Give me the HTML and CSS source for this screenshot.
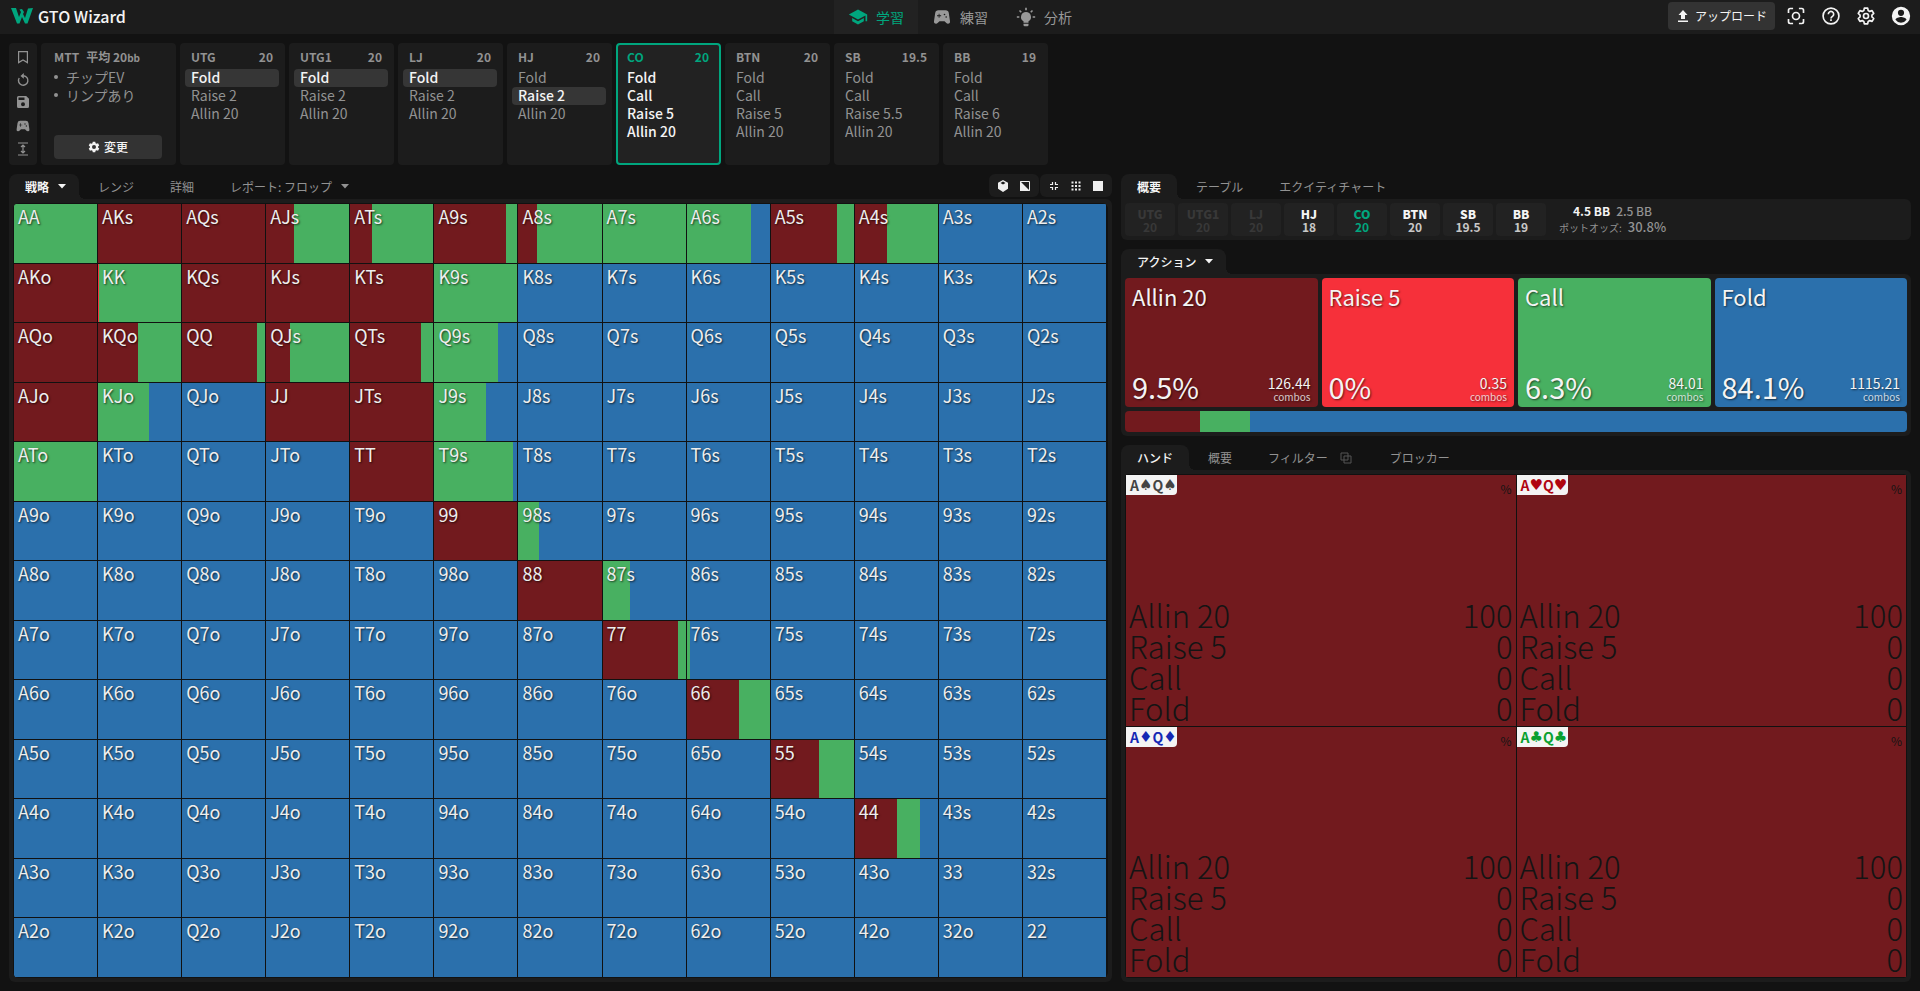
FILE: index.html
```html
<!DOCTYPE html>
<html lang="ja">
<head>
<meta charset="utf-8">
<title>GTO Wizard</title>
<link rel="stylesheet" href="styles.css">
</head>
<body>
<svg class="defs" aria-hidden="true">
  <symbol id="i-pad" viewBox="0 -1 24 24"><path fill="currentColor" fill-rule="evenodd" d="M21.6 16.1 20.2 6.4A4 4 0 0 0 16.200 3H7.800A4 4 0 0 0 3.800 6.400L2.400 16.100A2.550 2.550 0 0 0 4.900 19c.7 0 1.300-.3 1.800-.75L9 16h6l2.250 2.250c.5.450 1.150.750 1.800.750a2.550 2.550 0 0 0 2.550-2.900zM11 10H9v2H8v-2H6V9h2V7h1v2h2v1zm4-1a1 1 0 1 1 0-2 1 1 0 0 1 0 2zm2 3a1 1 0 1 1 0-2 1 1 0 0 1 0 2z"/></symbol>
  <symbol id="i-down" viewBox="0 0 8 5"><path fill="currentColor" d="M0 0h8L4 4.500z"/></symbol>
</svg>
<div class="app">
  <header class="topbar">
    <a class="brand" href="#">
      <svg width="22" height="16" viewBox="0 0 22 16" aria-hidden="true"><path fill="#00a67e" d="M0 0h5l3 9 2-5-1.500-2.500L11 1l2 3-1 2 2 4 3-9.500L22 0l-5.500 15.500H14L11 9l-2.500 6.500H6z"/></svg>
      <span>GTO Wizard</span>
    </a>
    <nav class="mainnav">
      <a class="navitem is-active" href="#"><svg width="20" height="20" viewBox="0 0 24 24"><path fill="currentColor" d="M5 13.200v4L12 21l7-3.800v-4L12 17zM12 3 1 9l11 6 9-4.900V17h2V9z"/></svg>学習</a>
      <a class="navitem" href="#"><svg width="20" height="20"><use href="#i-pad"/></svg>練習</a>
      <a class="navitem" href="#"><svg width="20" height="20" viewBox="0 0 24 24"><path fill="currentColor" d="M12 6a6 6 0 0 0-3 11.200V19h6v-1.800A6 6 0 0 0 12 6zM9 20h6v1.500a1.500 1.500 0 0 1-1.500 1.500h-3A1.500 1.500 0 0 1 9 21.500zM11 1h2v3h-2zM1 11h3v2H1zm19 0h3v2h-3zM3.500 4.900l1.400-1.400L7 5.600 5.600 7zm15.600-1.400 1.400 1.400L18.400 7 17 5.600z"/></svg>分析</a>
    </nav>
    <div class="tools">
      <button class="upload"><svg width="12" height="12" viewBox="0 0 12 12"><path fill="currentColor" d="M6 0 1.500 5H4v4h4V5h2.500zM1 10.500h10V12H1z"/></svg>アップロード</button>
      <button class="tool" aria-label="キャプチャ"><svg width="20" height="20" viewBox="0 0 24 24" fill="none" stroke="currentColor" stroke-width="2"><path d="M3 8.500V5a2 2 0 0 1 2-2h3.500M15.500 3H19a2 2 0 0 1 2 2v3.500M21 15.500V19a2 2 0 0 1-2 2h-3.500M8.500 21H5a2 2 0 0 1-2-2v-3.500"/><circle cx="12" cy="12" r="4.200"/></svg></button>
      <button class="tool" aria-label="ヘルプ"><svg width="20" height="20" viewBox="0 0 24 24" fill="none" stroke="currentColor" stroke-width="2"><circle cx="12" cy="12" r="9.500"/><path d="M8.800 9.800a3.200 3.200 0 1 1 5 2.600c-1 .7-1.800 1.300-1.800 2.600M12 16v2"/></svg></button>
      <button class="tool" aria-label="設定"><svg width="20" height="20" viewBox="0 0 24 24" fill="none" stroke="currentColor" stroke-width="2" stroke-linejoin="round"><path d="M10 2.500h4l.6 2.900 1.900 1.100 2.800-.9 2 3.400-2.200 2v2l2.200 2-2 3.400-2.800-.9-1.900 1.100-.6 2.900h-4l-.6-2.900-1.900-1.100-2.800.9-2-3.400 2.200-2v-2l-2.200-2 2-3.400 2.800.9 1.900-1.100z"/><circle cx="12" cy="12" r="3"/></svg></button>
      <button class="tool" aria-label="アカウント"><svg width="20" height="20" viewBox="0 0 24 24"><path fill="currentColor" fill-rule="evenodd" d="M12 1a11 11 0 1 0 0 22 11 11 0 0 0 0-22zm0 3.500a3.700 3.700 0 1 1 0 7.400 3.700 3.700 0 0 1 0-7.400zM12 20a8 8 0 0 1-6.600-3.500c0-2.200 4.400-3.400 6.600-3.400s6.600 1.200 6.600 3.400A8 8 0 0 1 12 20z"/></svg></button>
    </div>
  </header>

  <section class="spots">
    <div class="rail">
      <button aria-label="ブックマーク"><svg width="14" height="14" viewBox="0 0 14 14" fill="none" stroke="currentColor" stroke-width="1.200"><path d="M2.600 1.600h8.800v11L7 10l-4.400 2.600z"/></svg></button>
      <button aria-label="リセット"><svg width="14" height="14" viewBox="0 0 14 14" fill="none" stroke="currentColor" stroke-width="1.400"><path d="M3.200 5a4.700 4.700 0 1 0 4.300-2.200"/><path fill="currentColor" stroke="none" d="M7.800 0v5.800L4.500 2.900z"/></svg></button>
      <button aria-label="保存"><svg width="14" height="14" viewBox="0 0 14 14"><path fill="currentColor" fill-rule="evenodd" d="M2.500 1h7.700L13 3.800v7.700a1.500 1.500 0 0 1-1.500 1.500h-9A1.500 1.500 0 0 1 1 11.500v-9A1.500 1.500 0 0 1 2.500 1zM2.500 2.500V5h6V2.500zM7 7.200a2 2 0 1 0 0 4 2 2 0 0 0 0-4z"/></svg></button>
      <button aria-label="練習する"><svg width="16" height="16"><use href="#i-pad"/></svg></button>
      <button aria-label="高さ"><svg width="14" height="14" viewBox="0 0 14 14" fill="none" stroke="currentColor" stroke-width="1.200"><path d="M2 1h10M2 13h10M7 3v8M5 5l2-2 2 2M5 9l2 2 2-2"/></svg></button>
    </div>
    <div class="spot setup">
      <div class="spot-head"><span>MTT</span><span>平均 20<small>bb</small></span></div>
      <ul><li>チップEV</li><li>リンプあり</li></ul>
      <button class="change"><svg width="12" height="12" viewBox="0 0 24 24"><path fill="currentColor" fill-rule="evenodd" d="M9.500 1.500h5l.6 3 2 1.200 3-1 2.400 4.200-2.400 2v2.200l2.400 2-2.400 4.200-3-1-2 1.200-.6 3h-5l-.6-3-2-1.200-3 1-2.400-4.200 2.400-2v-2.200l-2.400-2 2.400-4.200 3 1 2-1.200zM12 8a4 4 0 1 0 0 8 4 4 0 0 0 0-8z"/></svg>変更</button>
    </div>
    <div class="spot"><div class="spot-head"><span>UTG</span><span>20</span></div><button class="act is-on">Fold</button><button class="act">Raise 2</button><button class="act">Allin 20</button></div>
    <div class="spot"><div class="spot-head"><span>UTG1</span><span>20</span></div><button class="act is-on">Fold</button><button class="act">Raise 2</button><button class="act">Allin 20</button></div>
    <div class="spot"><div class="spot-head"><span>LJ</span><span>20</span></div><button class="act is-on">Fold</button><button class="act">Raise 2</button><button class="act">Allin 20</button></div>
    <div class="spot"><div class="spot-head"><span>HJ</span><span>20</span></div><button class="act">Fold</button><button class="act is-on">Raise 2</button><button class="act">Allin 20</button></div>
    <div class="spot is-current"><div class="spot-head"><span>CO</span><span>20</span></div><button class="act">Fold</button><button class="act">Call</button><button class="act">Raise 5</button><button class="act">Allin 20</button></div>
    <div class="spot"><div class="spot-head"><span>BTN</span><span>20</span></div><button class="act">Fold</button><button class="act">Call</button><button class="act">Raise 5</button><button class="act">Allin 20</button></div>
    <div class="spot"><div class="spot-head"><span>SB</span><span>19.5</span></div><button class="act">Fold</button><button class="act">Call</button><button class="act">Raise 5.5</button><button class="act">Allin 20</button></div>
    <div class="spot"><div class="spot-head"><span>BB</span><span>19</span></div><button class="act">Fold</button><button class="act">Call</button><button class="act">Raise 6</button><button class="act">Allin 20</button></div>
  </section>

  <main class="work">
    <section class="col">
      <div class="tabs">
        <button class="tab is-active strong">戦略<svg class="caret" width="8" height="5"><use href="#i-down"/></svg></button>
        <button class="tab">レンジ</button>
        <button class="tab">詳細</button>
        <button class="tab">レポート: フロップ<svg class="caret" width="8" height="5"><use href="#i-down"/></svg></button>
        <div class="views">
          <div class="viewgroup">
            <button aria-label="3D"><svg width="12" height="12" viewBox="0 0 12 12"><path fill="currentColor" fill-rule="evenodd" d="M6 0l5 2.800v6L6 12 1 8.800v-6zM6 1.600 3.500 3 6 4.400 8.500 3z"/></svg></button>
            <button aria-label="分割"><svg width="12" height="12" viewBox="0 0 12 12"><path fill="none" stroke="currentColor" d="M1.500 1.500h9v9h-9z"/><path fill="currentColor" d="M1 1v10h10z"/></svg></button>
          </div>
          <div class="viewgroup">
            <button aria-label="縮小"><svg width="12" height="12" viewBox="0 0 12 12"><path fill="none" stroke="currentColor" stroke-width="1.200" d="M4.500 2v2.500H2M7.500 2v2.500H10M4.500 10V7.500H2M7.500 10V7.500H10"/></svg></button>
            <button aria-label="グリッド"><svg width="12" height="12" viewBox="0 0 12 12"><path fill="none" stroke="currentColor" stroke-width="2" stroke-dasharray="2 1.500" d="M1.500 2.500h9M1.500 6h9M1.500 9.500h9"/></svg></button>
            <button aria-label="単色"><svg width="12" height="12" viewBox="0 0 12 12"><path fill="currentColor" d="M1 1h10v10H1z"/></svg></button>
          </div>
        </div>
      </div>
      <div class="panel grow"><div class="matrix" id="matrix"></div></div>
    </section>

    <section class="col">
      <div class="tabs">
        <button class="tab is-active strong">概要</button>
        <button class="tab">テーブル</button>
        <button class="tab">エクイティチャート</button>
      </div>
      <div class="panel players">
        <div class="player is-out"><b>UTG</b><span>20</span></div>
        <div class="player is-out"><b>UTG1</b><span>20</span></div>
        <div class="player is-out"><b>LJ</b><span>20</span></div>
        <div class="player"><b>HJ</b><span>18</span></div>
        <div class="player is-hero"><b>CO</b><span>20</span></div>
        <div class="player"><b>BTN</b><span>20</span></div>
        <div class="player"><b>SB</b><span>19.5</span></div>
        <div class="player"><b>BB</b><span>19</span></div>
        <div class="pot">
          <div><b>4.5 BB</b><span>2.5 BB</span></div>
          <div><small>ポットオッズ:</small><span class="odds">30.8%</span></div>
        </div>
      </div>

      <div class="tabs">
        <button class="tab is-active">アクション<svg class="caret" width="8" height="5"><use href="#i-down"/></svg></button>
      </div>
      <div class="panel">
        <div class="actions">
          <button class="action allin"><span class="name">Allin 20</span><span class="foot"><span class="pct">9.5%</span><span class="combos">126.44<small>combos</small></span></span></button>
          <button class="action raise"><span class="name">Raise 5</span><span class="foot"><span class="pct">0%</span><span class="combos">0.35<small>combos</small></span></span></button>
          <button class="action call"><span class="name">Call</span><span class="foot"><span class="pct">6.3%</span><span class="combos">84.01<small>combos</small></span></span></button>
          <button class="action fold"><span class="name">Fold</span><span class="foot"><span class="pct">84.1%</span><span class="combos">1115.21<small>combos</small></span></span></button>
        </div>
        <div class="bar"><i class="allin" style="width:9.6%"></i><i class="call" style="width:6.4%"></i><i class="fold" style="width:84%"></i></div>
      </div>

      <div class="tabs">
        <button class="tab is-active">ハンド</button>
        <button class="tab">概要</button>
        <button class="tab">フィルター<svg class="copy" width="12" height="12" viewBox="0 0 12 12" fill="none" stroke="currentColor"><path d="M1 1h7v7H1zM4 4h7v7H4z"/></svg></button>
        <button class="tab">ブロッカー</button>
      </div>
      <div class="panel grow">
        <div class="hands">
          <article class="hand"><div class="hand-top"><span class="cards spade">A<i>♠</i>Q<i>♠</i></span><span class="unit">%</span></div><dl><dt>Allin 20</dt><dd>100</dd><dt>Raise 5</dt><dd>0</dd><dt>Call</dt><dd>0</dd><dt>Fold</dt><dd>0</dd></dl></article>
          <article class="hand"><div class="hand-top"><span class="cards heart">A<i>♥</i>Q<i>♥</i></span><span class="unit">%</span></div><dl><dt>Allin 20</dt><dd>100</dd><dt>Raise 5</dt><dd>0</dd><dt>Call</dt><dd>0</dd><dt>Fold</dt><dd>0</dd></dl></article>
          <article class="hand"><div class="hand-top"><span class="cards diamond">A<i>♦</i>Q<i>♦</i></span><span class="unit">%</span></div><dl><dt>Allin 20</dt><dd>100</dd><dt>Raise 5</dt><dd>0</dd><dt>Call</dt><dd>0</dd><dt>Fold</dt><dd>0</dd></dl></article>
          <article class="hand"><div class="hand-top"><span class="cards club">A<i>♣</i>Q<i>♣</i></span><span class="unit">%</span></div><dl><dt>Allin 20</dt><dd>100</dd><dt>Raise 5</dt><dd>0</dd><dt>Call</dt><dd>0</dd><dt>Fold</dt><dd>0</dd></dl></article>
        </div>
      </div>
    </section>
  </main>
</div>
<script src="matrix.js"></script>
</body>
</html>
```
FILE: matrix.js
```js
// Frequencies in percent: [allin, raise, call]; the rest folds.
const strategy = {
  AA: [0, 0, 100], AKs: [100], AQs: [100], AJs: [33.5, 0.5, 66], ATs: [27, 0, 73],
  A9s: [86.5, 0, 13.5], A8s: [23, 0, 77], A7s: [0, 0, 100], A6s: [0, 0, 77.5],
  A5s: [79, 0, 21], A4s: [38, 0, 62],
  AKo: [100], KK: [0, 1.5, 98.5], KQs: [100], KJs: [100], KTs: [100], K9s: [0, 0, 100],
  AQo: [100], KQo: [48, 0, 52], QQ: [90, 0, 10], QJs: [28.5, 0, 71.5], QTs: [85.5, 0, 14.5], Q9s: [0, 0, 77],
  AJo: [100], KJo: [0, 0, 61.5], JJ: [100], JTs: [100], J9s: [0, 0, 63],
  ATo: [0, 0, 100], TT: [100], T9s: [0, 0, 95],
  99: [100], "98s": [0, 0, 25], 88: [100], "87s": [0, 0, 32],
  77: [90.5, 0, 9.5], "76s": [0, 0, 4], 66: [63, 0, 37], 55: [58, 0, 42], 44: [50, 0, 28]
};
const colors = ["#721a1e", "#f6303a", "#48b061", "#2b70ac"];
const ranks = "AKQJT98765432";
const matrix = document.getElementById("matrix");

for (let r = 0; r < 13; r++) {
  for (let c = 0; c < 13; c++) {
    const name = r === c ? ranks[r] + ranks[c]
      : r < c ? ranks[r] + ranks[c] + "s" : ranks[c] + ranks[r] + "o";
    const [a = 0, b = 0, d = 0] = strategy[name] || [];
    const cell = document.createElement("button");
    cell.className = "cell";
    cell.textContent = name;
    let from = 0;
    const stops = [a, b, d, 100 - a - b - d].map((w, i) => {
      const stop = w > 0 ? `${colors[i]} ${from}% ${from + w}%` : "";
      from += w;
      return stop;
    }).filter(Boolean);
    cell.style.background = `linear-gradient(to right, ${stops.join(", ")})`;
    matrix.append(cell);
  }
}
```
FILE: styles.css
```css
:root {
  --bg: #121212;
  --panel: #1c1c1c;
  --raised: #222222;
  --control: #333333;
  --muted: #929292;
  --text: #f4f4f4;
  --accent: #00a67e;
  --allin: #721a1e;
  --raise: #f6303a;
  --call: #48b061;
  --fold: #2b70ac;
}
* { box-sizing: border-box; }
body {
  margin: 0;
  background: var(--bg);
  color: var(--text);
  font: 12px/18px "Noto Sans CJK JP", "Noto Sans", sans-serif;
}
button {
  margin: 0;
  padding: 0;
  border: 0;
  background: none;
  color: inherit;
  font: inherit;
  text-align: left;
  cursor: pointer;
}
a { color: inherit; text-decoration: none; }
svg { display: block; flex: none; }
.defs { display: none; }
.app { display: flex; flex-direction: column; min-height: 100vh; }

/* Top bar */
.topbar {
  display: grid;
  grid-template-columns: 1fr auto 1fr;
  height: 34px;
  background: var(--panel);
}
.brand { display: flex; align-items: center; gap: 5px; padding: 0 0 3px 11px; font-size: 16px; font-weight: 500; }
.mainnav { display: flex; color: #999999; font-size: 14px; }
.navitem { display: flex; align-items: center; gap: 8px; padding: 0 14px; }
.navitem.is-active { background: var(--raised); color: var(--accent); }
.tools { display: flex; align-items: center; justify-content: flex-end; gap: 15px; padding: 0 9px 2px 0; }
.upload {
  display: flex;
  align-items: center;
  gap: 6px;
  height: 28px;
  padding: 0 8px 0 9px;
  margin-right: -4px;
  border-radius: 4px;
  background: var(--control);
}

/* Position cards */
.spots { display: flex; gap: 4px; padding: 9px; height: 140px; }
.rail {
  display: flex;
  flex-direction: column;
  align-items: center;
  justify-content: space-between;
  width: 28px;
  padding: 7px 0 9px;
  border-radius: 4px;
  background: var(--panel);
  color: var(--muted);
}
.spot {
  display: flex;
  flex-direction: column;
  width: 105px;
  padding: 5px 6px 0 5px;
  border-radius: 4px;
  background: var(--panel);
  color: var(--muted);
}
.spot-head { display: flex; justify-content: space-between; padding: 0 6px; margin-bottom: 3px; font-weight: 700; }
.act { height: 18px; padding: 0 6px 2px; border-radius: 4px; font-size: 14px; line-height: 16px; }
.act.is-on { background: #363636; color: var(--text); font-weight: 500; }
.spot.is-current { padding: 3px 4px 0 3px; border: 2px solid var(--accent); background: var(--raised); color: var(--text); font-weight: 500; }
.is-current .spot-head { color: var(--accent); }
.setup { width: 135px; padding: 5px 14px 6px 13px; }
.setup .spot-head { justify-content: flex-start; gap: 7px; padding: 0; margin-bottom: 1px; }
.spot-head small { font-size: 10px; }
.setup ul { margin: 0; padding: 0 0 0 12px; list-style: none; font-size: 14px; }
.setup li::before {
  content: "";
  float: left;
  width: 4px;
  height: 4px;
  margin: 7px 0 0 -12px;
  border-radius: 50%;
  background: currentColor;
}
.change {
  display: flex;
  align-items: center;
  justify-content: center;
  gap: 4px;
  height: 24px;
  margin-top: auto;
  border-radius: 4px;
  background: var(--control);
  color: var(--text);
  font-weight: 500;
}

/* Work area */
.work {
  flex: 1;
  display: grid;
  grid-template-columns: 1103fr 790fr;
  gap: 9px;
  padding: 0 9px 9px;
}
.col { display: flex; flex-direction: column; min-width: 0; }
.tabs { display: flex; height: 25px; color: var(--muted); }
.tab { display: flex; align-items: center; padding: 0 18px; }
.tab.is-active {
  position: relative;
  padding: 0 16px;
  margin-right: 1px;
  border-radius: 8px 8px 0 0;
  background: var(--panel);
  color: var(--text);
  font-weight: 500;
}
.tab.is-active::after {
  content: "";
  position: absolute;
  left: 100%;
  bottom: 0;
  width: 6px;
  height: 6px;
  background: radial-gradient(circle at 100% 0, transparent 6px, var(--panel) 6px);
}
.tab.strong { font-weight: 700; }
.caret { margin-left: 9px; }
.is-active .caret { margin-right: -3px; }
.copy { margin: 0 2px 0 12px; color: #555555; }
.views { display: flex; gap: 1px; margin-left: auto; }
.viewgroup { display: flex; align-items: center; gap: 10px; height: 23px; padding: 0 8px; border-radius: 6px; background: var(--panel); color: #eeeeee; }
.panel { padding: 4px; border-radius: 0 6px 6px 6px; background: var(--panel); }
.panel + .tabs { margin-top: 9px; }
.grow { flex: 1; display: flex; }

/* Hand matrix */
.matrix {
  flex: 1;
  display: grid;
  grid-template: repeat(13, 1fr) / repeat(13, 1fr);
  gap: 1px;
  padding: 1px 2px 1px 1px;
  border-radius: 6px;
  background: #111111;
  overflow: hidden;
}
.cell {
  display: flex;
  align-items: flex-start;
  min-width: 0;
  padding: 0 4px;
  color: #eeeeee;
  font-size: 18px;
  line-height: 24px;
  text-shadow: 1px 1px 2px #000000aa;
}

/* Players */
.players { display: flex; gap: 3px; height: 41px; }
.player {
  display: flex;
  flex-direction: column;
  justify-content: center;
  width: 50px;
  border-radius: 4px;
  background: var(--raised);
  font-weight: 700;
  line-height: 13px;
  text-align: center;
}
.player span { color: #c8c8c8; }
.player.is-out, .player.is-out span { color: #383838; }
.player.is-hero, .player.is-hero span { color: var(--accent); }
.pot { padding: 0 0 0 10px; color: var(--muted); font-weight: 500; line-height: 16px; text-align: center; }
.pot div { display: flex; align-items: baseline; justify-content: center; gap: 6px; }
.pot b { color: var(--text); }
.pot small { font-size: 10px; font-weight: 400; }
.odds { font-size: 13px; }

/* Action summary */
.actions { display: grid; grid-template-columns: repeat(4, 1fr); gap: 4px; }
.action {
  display: flex;
  flex-direction: column;
  justify-content: space-between;
  height: 129px;
  padding: 5px 7px 4px;
  border-radius: 4px;
  text-shadow: 1px 1px 2px #00000099;
}
.name { font-size: 22px; line-height: 26px; }
.foot { display: flex; justify-content: space-between; align-items: flex-end; }
.pct { font-size: 29px; line-height: 34px; }
.combos { display: flex; flex-direction: column; font-size: 14px; line-height: 15px; text-align: right; }
.combos small { font-size: 10px; line-height: 12px; opacity: 0.8; }
.allin { background: var(--allin); }
.raise { background: var(--raise); }
.call { background: var(--call); }
.fold { background: var(--fold); }
.bar { display: flex; height: 21px; margin-top: 4px; border-radius: 4px; overflow: hidden; }

/* Hands */
.hands {
  flex: 1;
  display: grid;
  grid-template: 1fr 1fr / 1fr 1fr;
  gap: 1px;
  padding: 1px;
  border-radius: 4px;
  background: #111111;
  overflow: hidden;
}
.hand { display: flex; flex-direction: column; justify-content: space-between; background: var(--allin); color: #141414; }
.hand-top { display: flex; justify-content: space-between; align-items: flex-start; }
.cards {
  display: flex;
  align-items: center;
  width: 51px;
  height: 20px;
  padding-left: 4px;
  border-radius: 0 0 4px 0;
  background: #f4f4f4;
  font-size: 14px;
  font-weight: 700;
}
.cards i { font: 15px/18px "DejaVu Sans", sans-serif; }
.spade { color: #444444; }
.heart { color: #b00610; }
.diamond { color: #1428b4; }
.club { color: #0aa030; }
.unit { padding: 5px 4px 0; }
.hand dl {
  display: grid;
  grid-template-columns: 1fr auto;
  margin: 0;
  padding: 0 3px 3px;
  font-size: 31px;
  font-weight: 300;
  line-height: 31px;
}
.hand dd { margin: 0; text-align: right; }
```
